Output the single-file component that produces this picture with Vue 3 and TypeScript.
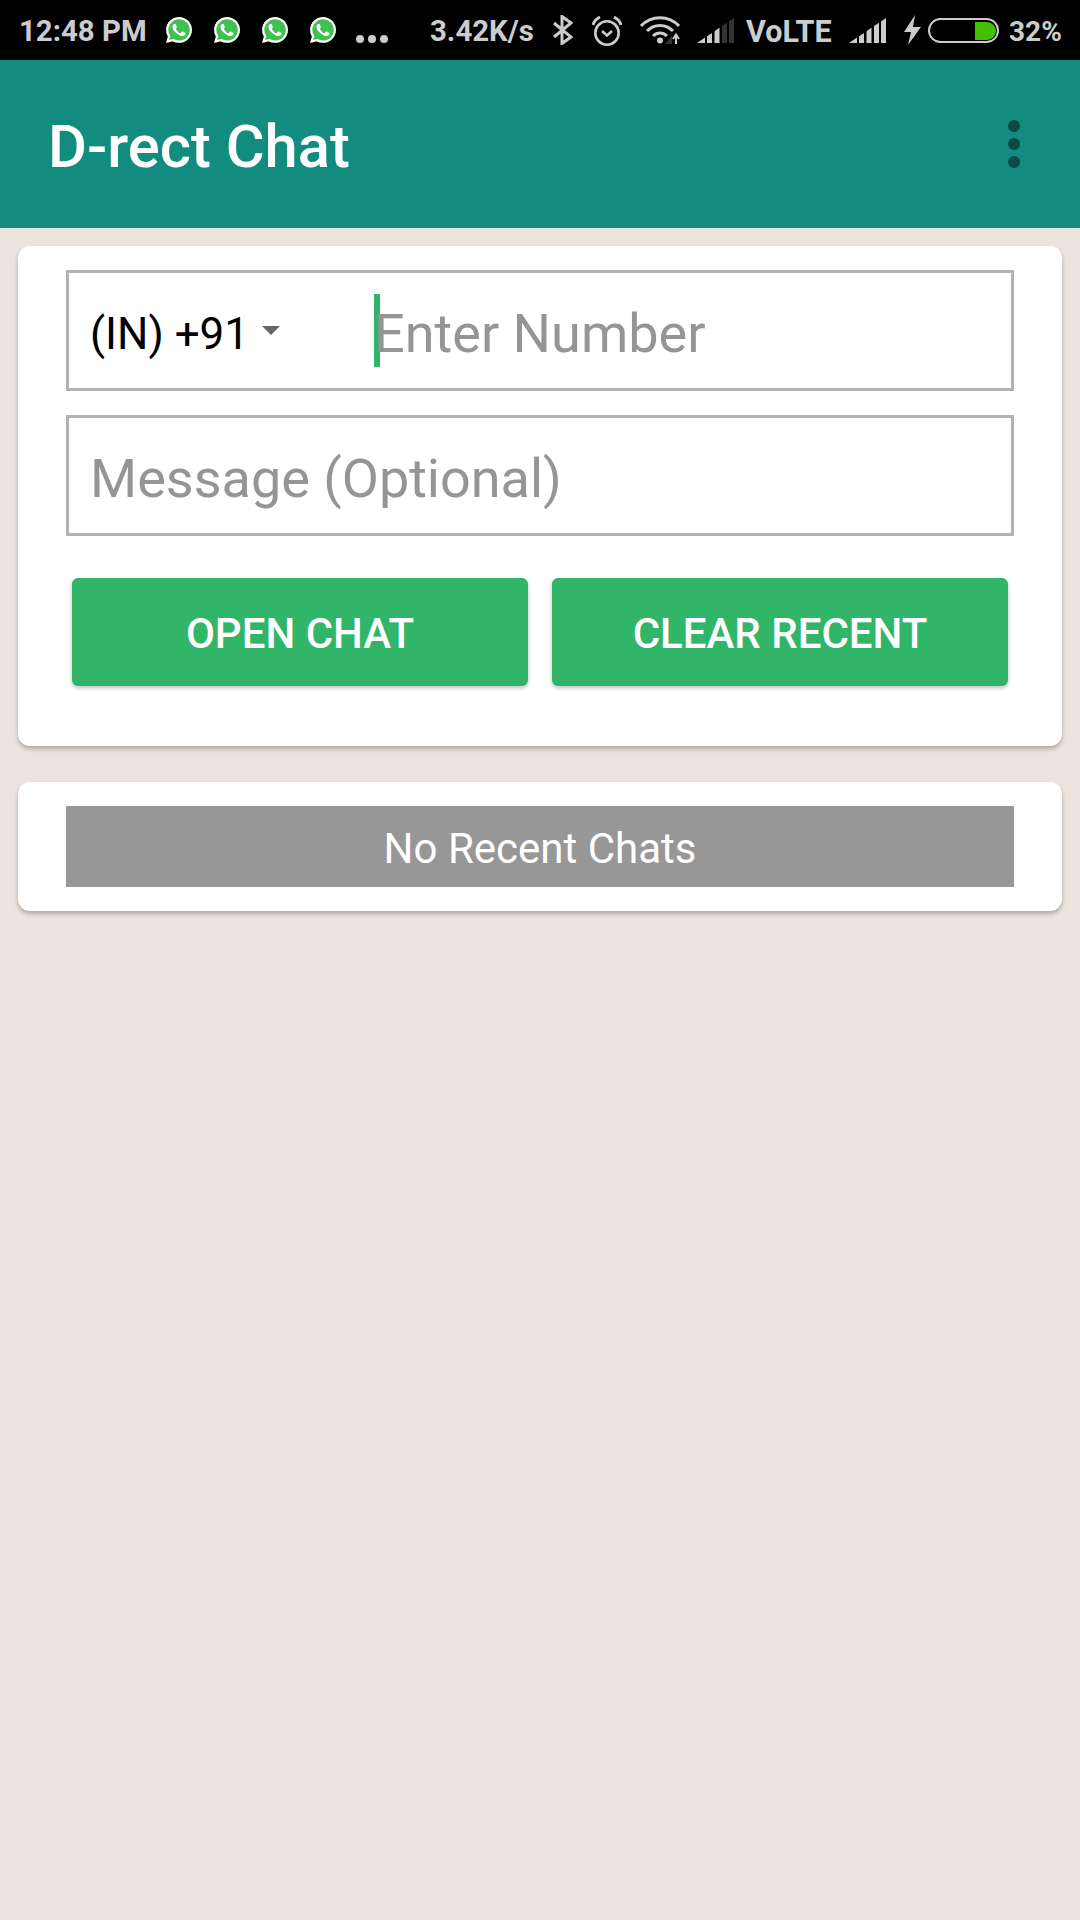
<script setup lang="ts">
const chatIcons = [0, 1, 2, 3];

// signal bars: the tops follow one diagonal, like the stock status bar icon
const barEdges = [
  [0, 8],
  [10, 15],
  [17.5, 22.5],
  [25, 30],
  [32, 37]
];
const bars = barEdges.map(([a, b]) => {
  const top = (x: number) => (25 - (x * 25) / 37).toFixed(1);
  return `${a},25 ${a},${top(a)} ${b},${top(b)} ${b},25`;
});
</script>

<template>
  <div class="screen">
    <div class="status-bar">
      <span class="time">12:48 PM</span>
      <div class="chat-icons">
        <svg v-for="i in chatIcons" :key="i" width="26" height="26" viewBox="0 0 24 24">
          <path fill="#fff" d="M20.52 3.449C18.24 1.245 15.24 0 12.045 0 5.463 0 .104 5.334.101 11.893c0 2.096.549 4.14 1.595 5.945L0 24l6.335-1.652c1.746.943 3.71 1.444 5.71 1.447h.006c6.585 0 11.946-5.336 11.949-11.896 0-3.176-1.24-6.165-3.48-8.45" />
          <path fill="#3fc152" d="M12.051 21.785h-.004a9.87 9.87 0 01-5.031-1.378l-.361-.214-3.741.982.998-3.648-.235-.374a9.86 9.86 0 01-1.51-5.26c.001-5.45 4.436-9.884 9.888-9.884 2.64 0 5.122 1.03 6.988 2.898a9.825 9.825 0 012.893 6.994c-.003 5.45-4.437 9.884-9.885 9.884" />
          <path fill="#fff" d="M17.472 14.382c-.297-.149-1.758-.867-2.03-.967-.273-.099-.471-.148-.67.15-.197.297-.767.966-.94 1.164-.173.199-.347.223-.644.075-.297-.15-1.255-.463-2.39-1.475-.883-.788-1.48-1.761-1.653-2.059-.173-.297-.018-.458.13-.606.134-.133.298-.347.446-.52.149-.174.198-.298.298-.497.099-.198.05-.371-.025-.52-.075-.149-.669-1.612-.916-2.207-.242-.579-.487-.5-.669-.51-.173-.008-.371-.01-.57-.01-.198 0-.52.074-.792.372-.272.297-1.04 1.016-1.04 2.479 0 1.462 1.065 2.875 1.213 3.074.149.198 2.096 3.2 5.077 4.487.709.306 1.262.489 1.694.625.712.227 1.36.195 1.871.118.571-.085 1.758-.719 2.006-1.413.248-.694.248-1.289.173-1.413-.074-.124-.272-.198-.57-.347" />
        </svg>
      </div>
      <div class="more-dots"><i></i><i></i><i></i></div>
      <span class="speed">3.42K/s</span>
      <svg class="bt" width="20" height="30" viewBox="0 0 20 30" fill="none" stroke="#ccc" stroke-width="3">
        <path d="M1 8 L18 22 L9 28.5 V1.5 L18 8 L1 22" />
      </svg>
      <svg class="alarm" width="30" height="32" viewBox="0 0 30 32" fill="none" stroke="#ccc">
        <circle cx="15" cy="19" r="11.7" stroke-width="2.6" />
        <path d="M10 17 L15 21.5 L20 17" stroke-width="2.6" />
        <path d="M1 11 C2 7 4 5 8 3 M29 11 C28 7 26 5 22 3" stroke-width="3" />
      </svg>
      <svg class="wifi" width="40" height="28" viewBox="0 0 40 28" fill="none" stroke="#ccc" stroke-width="3">
        <path d="M1 10 C11 -1 29 -1 39 10" />
        <path d="M7 15 C14 7.5 26 7.5 33 15" />
        <path d="M13 20 C17 16 23 16 27 20" />
        <circle cx="20" cy="24.5" r="3" fill="#ccc" stroke="none" />
        <path d="M25 28 L32 20 V28 Z" fill="#333" stroke="none" />
        <path d="M36 28 V20 M33 23 L36 18.5 L39 23" stroke-width="2" />
      </svg>
      <svg class="sim-weak" width="37" height="25" viewBox="0 0 37 25">
        <polygon v-for="(pts, i) in bars" :key="i" :points="pts" :fill="i < 3 ? '#ccc' : '#333'" />
      </svg>
      <span class="volte">VoLTE</span>
      <svg class="sim-full" width="37" height="25" viewBox="0 0 37 25">
        <polygon v-for="(pts, i) in bars" :key="i" :points="pts" fill="#ccc" />
      </svg>
      <svg class="bolt" width="17" height="30" viewBox="0 0 17 30">
        <path fill="#ccc" d="M11 0 L0 17 H7 L4 30 L17 12 H9 Z" />
      </svg>
      <div class="battery"><div class="battery-fill"></div></div>
      <span class="percent">32%</span>
    </div>

    <div class="app-bar">
      <span class="title">D-rect Chat</span>
      <div class="menu"><i></i><i></i><i></i></div>
    </div>

    <div class="card form-card">
      <div class="field">
        <span class="country">(IN) +91</span>
        <span class="arrow"></span>
        <span class="caret"></span>
        <span class="placeholder">Enter Number</span>
      </div>
      <div class="field">
        <span class="placeholder">Message (Optional)</span>
      </div>
      <div class="actions">
        <button class="btn">OPEN CHAT</button>
        <button class="btn">CLEAR RECENT</button>
      </div>
    </div>

    <div class="card recent-card">
      <div class="empty">No Recent Chats</div>
    </div>
  </div>
</template>

<style>
html,
body {
  margin: 0;
  background: #ece4df;
}
</style>

<style scoped>
.screen {
  width: 1080px;
  height: 1920px;
  background: #ece4df;
  font-family: Roboto, "Liberation Sans", sans-serif;
  overflow: hidden;
}

.status-bar {
  height: 60px;
  background: #000;
  color: #ccc;
  display: flex;
  align-items: center;
  padding-left: 19px;
  box-sizing: border-box;
  font-size: 29.4px;
  font-weight: 700;
}

.time,
.speed,
.volte,
.percent {
  padding-top: 2px;
}

.time {
  width: 147px;
  flex-shrink: 0;
}

.chat-icons {
  display: flex;
  gap: 22px;
}

.more-dots {
  display: flex;
  gap: 4px;
  margin: 17px 0 0 20px;
}

.more-dots i {
  width: 8px;
  height: 8px;
  border-radius: 50%;
  background: #ccc;
}

.speed {
  margin-left: 42px;
  width: 105px;
  white-space: nowrap;
}

.bt {
  margin-left: 18px;
}

.alarm {
  margin-left: 19px;
}

.wifi {
  margin-left: 18px;
}

.sim-weak {
  margin-left: 17px;
}

.volte {
  margin-left: 12px;
  width: 85px;
  font-size: 30.5px;
  white-space: nowrap;
}

.sim-full {
  margin-left: 18px;
}

.bolt {
  margin-left: 18px;
}

.battery {
  margin-left: 7px;
  width: 71px;
  height: 25px;
  border: 2px solid #ccc;
  border-radius: 13px;
  box-sizing: border-box;
  padding: 2px 1px 1px 2px;
  display: flex;
  justify-content: flex-end;
}

.battery-fill {
  width: 21px;
  background: #43c000;
  border-radius: 0 10px 10px 0;
}

.percent {
  margin-left: 10px;
  font-size: 28px;
}

.app-bar {
  height: 168px;
  background: #128c7e;
  display: flex;
  align-items: center;
  justify-content: space-between;
  padding: 0 60px 0 48px;
  box-sizing: border-box;
}

.title {
  color: #fff;
  font-size: 59.7px;
  font-weight: 500;
  padding-top: 6px;
}

.menu {
  display: flex;
  flex-direction: column;
  gap: 6px;
}

.menu i {
  width: 12px;
  height: 12px;
  border-radius: 50%;
  background: #0a4a43;
}

.card {
  background: #fff;
  border-radius: 12px;
  margin: 0 18px;
  padding: 24px 48px;
  box-sizing: border-box;
  box-shadow: 0 3px 4px rgba(0, 0, 0, 0.25);
}

.form-card {
  margin-top: 18px;
  height: 500px;
}

.recent-card {
  margin-top: 36px;
  height: 129px;
}

.field {
  height: 121px;
  border: 3px solid #b2b2b2;
  box-sizing: border-box;
  display: flex;
  align-items: center;
  padding-left: 21px;
  margin-bottom: 24px;
}

.country {
  font-size: 44px;
  color: #000;
  padding-top: 6px;
}

.arrow {
  width: 0;
  height: 0;
  border-left: 9px solid transparent;
  border-right: 9px solid transparent;
  border-top: 9px solid #666;
  margin-left: 13px;
}

.caret {
  width: 6px;
  height: 73px;
  background: #2eb567;
  margin-left: 94px;
  margin-right: -6px;
}

.placeholder {
  font-size: 54px;
  color: #959595;
  padding-top: 6px;
}

.actions {
  display: flex;
  gap: 24px;
  padding: 18px 6px 0;
}

.btn {
  flex: 1;
  height: 108px;
  border: none;
  border-radius: 6px;
  background: #31b568;
  color: #fff;
  font-family: inherit;
  font-size: 42px;
  font-weight: 500;
  padding: 2px 0 0;
  box-shadow: 0 2px 4px rgba(0, 0, 0, 0.25);
}

.empty {
  height: 81px;
  background: #979797;
  color: #fff;
  font-size: 42px;
  padding-top: 4px;
  box-sizing: border-box;
  display: flex;
  align-items: center;
  justify-content: center;
}
</style>
